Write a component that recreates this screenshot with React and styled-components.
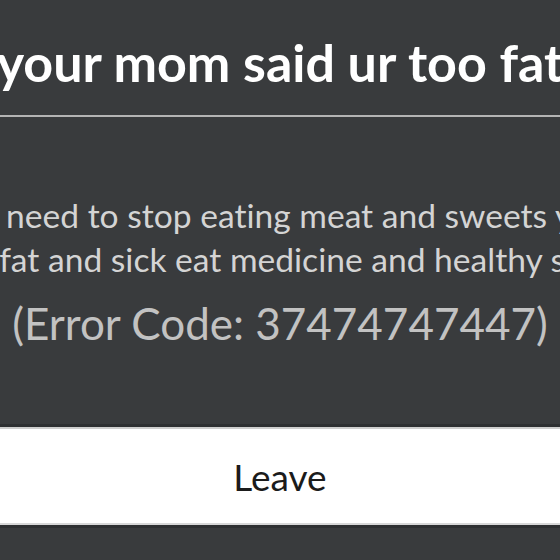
import React from "react";
import styled, { createGlobalStyle } from "styled-components";

const Global = createGlobalStyle`
  html, body { margin: 0; padding: 0; background: #393b3d; }
  body { overflow: hidden; }
`;

const Page = styled.div`
  width: 560px;
  height: 560px;
  overflow: hidden;
  background: #393b3d;
  display: flex;
  flex-direction: column;
  padding-top: 32px;
  box-sizing: border-box;
  font-family: Lato, "Open Sans", sans-serif;
  font-variant-ligatures: none;
`;

const Row = styled.div`
  display: flex;
  justify-content: center;
  width: 100%;
  margin-top: ${(p) => p.$mt || 0}px;
`;

const Title = styled.h1`
  margin: 0;
  flex: none;
  white-space: nowrap;
  font-size: 52px;
  line-height: 60px;
  font-weight: 700;
  color: #ffffff;
`;

const Divider = styled.div`
  margin-top: 23px;
  height: 2px;
  width: 100%;
  background: #b4b4b4;
  flex: none;
`;

const Message = styled.p`
  margin: 0;
  flex: none;
  white-space: nowrap;
  text-align: center;
  font-size: 33.6px;
  line-height: 44px;
  color: #d4d4d4;
`;

const Code = styled.p`
  margin: 0;
  flex: none;
  white-space: nowrap;
  font-size: 44px;
  line-height: 50px;
  color: #c2c2c2;
`;

const LeaveButton = styled.button`
  margin-top: ${(p) => p.$mt}px;
  width: 100%;
  height: 98px;
  flex: none;
  box-sizing: border-box;
  border: none;
  border-top: 2px solid #cfcfcf;
  border-bottom: 2px solid #d8d8d8;
  box-shadow: 0 -3px 0 #2e3032, 0 3px 0 #2e3032;
  background: #ffffff;
  color: #1b1b1b;
  font-family: Lato, "Open Sans", sans-serif;
  font-size: 37px;
  font-weight: 400;
  padding: 0;
  cursor: pointer;
`;

export default function App() {
  return (
    <>
      <Global />
      <Page>
        <Row>
          <Title>your mom said ur too fat</Title>
        </Row>
        <Divider />
        <Row $mt={76}>
          <Message>
            you need to stop eating meat and sweets you,
            <br />
            too fat and sick eat medicine and healthy stuff
          </Message>
        </Row>
        <Row $mt={17}>
          <Code>(Error Code: 37474747447)</Code>
        </Row>
        <LeaveButton $mt={79}>Leave</LeaveButton>
      </Page>
    </>
  );
}
